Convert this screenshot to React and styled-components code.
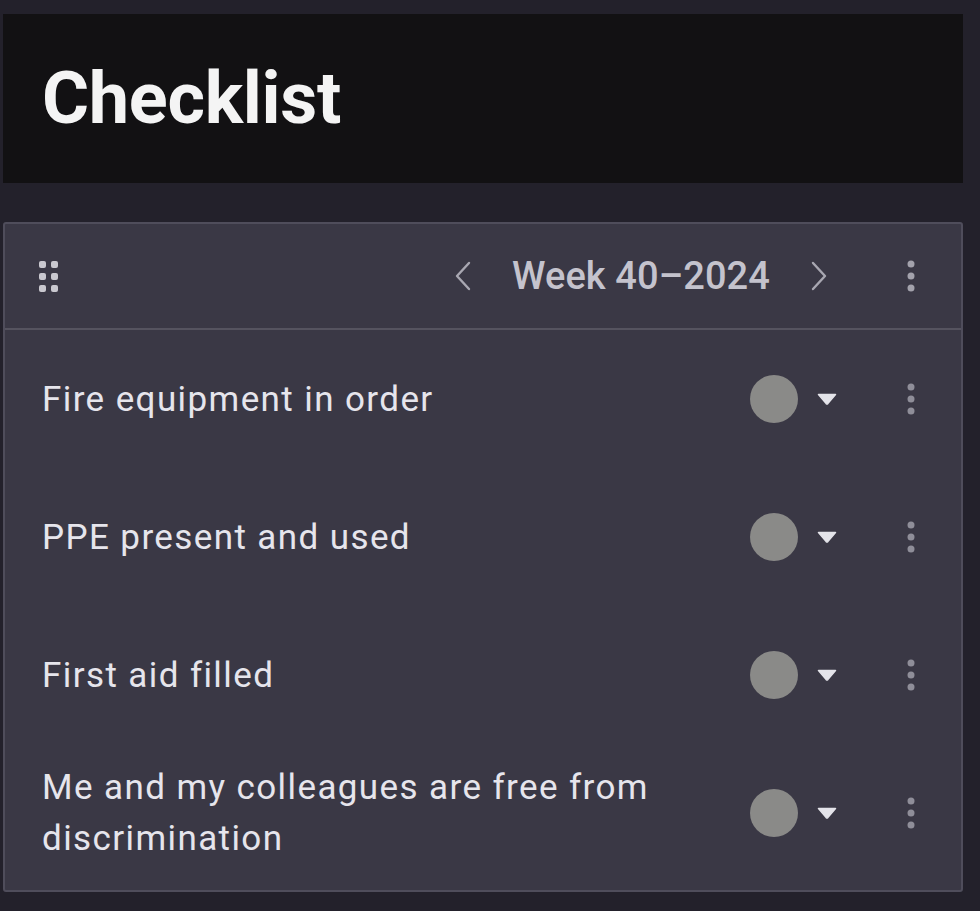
import React from 'react'
import styled, { createGlobalStyle } from 'styled-components'

const GlobalStyle = createGlobalStyle`
  html, body {
    margin: 0;
    padding: 0;
    background: #23212b;
    font-family: Roboto, "Liberation Sans", sans-serif;
  }
`;

const Page = styled.div`
  width: 980px;
  min-height: 911px;
  box-sizing: border-box;
  padding: 14px 17px 0 3px;
  background: #23212b;
  display: flex;
  flex-direction: column;
  gap: 39px;
`;

const TitleBar = styled.header`
  height: 169px;
  background: #121113;
  display: flex;
  align-items: center;
  padding-left: 39px;
  box-sizing: border-box;
`;

const Title = styled.h1`
  margin: 0;
  font-size: 72px;
  font-weight: 700;
  color: #f4f4f4;
  letter-spacing: -0.3px;
`;

const Card = styled.section`
  background: #3a3845;
  border: 2px solid #4f4d5b;
  border-radius: 3px;
  box-sizing: border-box;
  padding-bottom: 8px;
`;

const CardHead = styled.div`
  height: 104px;
  display: flex;
  align-items: center;
  padding: 0 26px 0 31px;
  border-bottom: 2px solid #55535f;
`;

const Spacer = styled.div`
  flex: 1;
`;

const WeekNav = styled.div`
  display: flex;
  align-items: center;
  gap: 41px;
  margin-right: 60px;
`;

const WeekLabel = styled.span`
  font-size: 38px;
  font-weight: 500;
  color: #c4c3cd;
  letter-spacing: 0.1px;
`;

const IconButton = styled.button`
  background: none;
  border: none;
  padding: 0;
  width: ${p => p.$w || 48}px;
  height: 48px;
  display: flex;
  align-items: center;
  justify-content: center;
  cursor: pointer;
`;

const Row = styled.div`
  height: 138px;
  display: flex;
  align-items: center;
  padding: 0 26px 0 37px;
`;

const RowText = styled.div`
  flex: 1;
  padding-right: 40px;
  font-size: 35px;
  line-height: 51px;
  letter-spacing: 1.4px;
  color: #e6e5ec;
`;

const Status = styled.div`
  width: 48px;
  height: 48px;
  border-radius: 50%;
  background: #8a8a88;
  margin-right: 19px;
`;

const Caret = styled.div`
  width: 20px;
  display: flex;
  justify-content: center;
  margin-right: 50px;
`;

function DragHandle() {
  return (
    <svg width="24" height="36" viewBox="0 0 24 36">
      {[0, 12, 24].map(y => (
        <g key={y} fill="#c9c8cf">
          <rect x="3" y={y + 3} width="7" height="7" rx="2" />
          <rect x="15" y={y + 3} width="7" height="7" rx="2" />
        </g>
      ))}
    </svg>
  );
}

function Kebab({ color }) {
  return (
    <svg width="8" height="34" viewBox="0 0 8 34" fill={color}>
      <circle cx="4" cy="5" r="3.5" />
      <circle cx="4" cy="17" r="3.5" />
      <circle cx="4" cy="29" r="3.5" />
    </svg>
  );
}

function Chevron({ dir }) {
  const d = dir === 'left' ? 'M14 2 L2 15 L14 28' : 'M2 2 L14 15 L2 28';
  return (
    <svg width="16" height="30" viewBox="0 0 16 30" fill="none" stroke="#a8a7b1" strokeWidth="2.4" strokeLinecap="round" strokeLinejoin="round">
      <path d={d} />
    </svg>
  );
}

function CaretDown() {
  return (
    <svg width="20" height="12" viewBox="0 0 20 12">
      <path d="M1.5 1.5 H18.5 L10.8 10.6 Q10 11.4 9.2 10.6 Z" fill="#e4e4ea" stroke="#e4e4ea" strokeWidth="1.5" strokeLinejoin="round" />
    </svg>
  );
}

const items = [
  'Fire equipment in order',
  'PPE present and used',
  'First aid filled',
  'Me and my colleagues are free from discrimination',
];

export default function App() {
  return (
    <>
      <GlobalStyle />
      <Page>
        <TitleBar>
          <Title>Checklist</Title>
        </TitleBar>
        <Card>
          <CardHead>
            <DragHandle />
            <Spacer />
            <WeekNav>
              <IconButton $w={16}><Chevron dir="left" /></IconButton>
              <WeekLabel>Week 40–2024</WeekLabel>
              <IconButton $w={16}><Chevron dir="right" /></IconButton>
            </WeekNav>
            <IconButton><Kebab color="#a3a2ac" /></IconButton>
          </CardHead>
          {items.map(text => (
            <Row key={text}>
              <RowText>{text}</RowText>
              <Status />
              <Caret><CaretDown /></Caret>
              <IconButton><Kebab color="#8f8e99" /></IconButton>
            </Row>
          ))}
        </Card>
      </Page>
    </>
  )
}
